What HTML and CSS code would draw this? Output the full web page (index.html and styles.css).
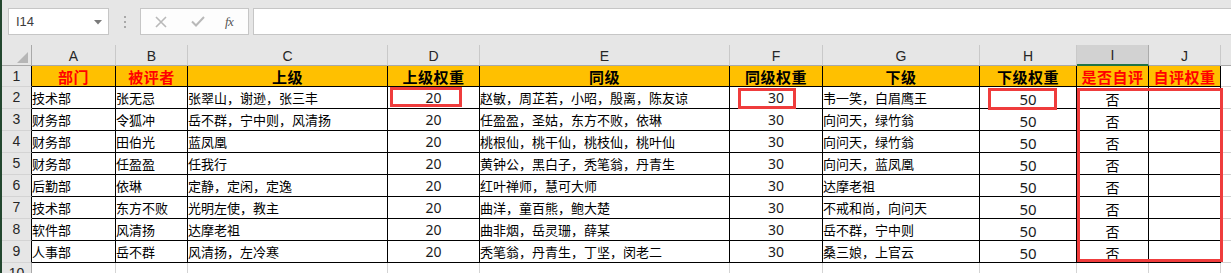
FILE: index.html
```html
<!DOCTYPE html>
<html lang="zh-CN">
<head>
<meta charset="utf-8">
<title>Sheet</title>
<link rel="stylesheet" href="styles.css">
</head>
<body>
<div class="app">
  <div class="toolbar">
    <div class="namebox">
      <span class="ref">I14</span>
      <svg class="caret" width="8" height="5" viewBox="0 0 8 5"><path d="M0 0H8L4 4.5Z" fill="#7a7a7a"/></svg>
    </div>
    <div class="grip"><i></i><i></i><i></i></div>
    <div class="fbtns">
      <svg class="ico-x" width="12" height="12" viewBox="0 0 12 12"><path d="M1 1L11 11M11 1L1 11" stroke="#b9b9b9" stroke-width="1.6" fill="none"/></svg>
      <svg class="ico-ok" width="14" height="11" viewBox="0 0 14 11"><path d="M1 5.5L5 9.5L13 1" stroke="#b9b9b9" stroke-width="2" fill="none"/></svg>
      <span class="fx">fx</span>
    </div>
    <div class="finput"></div>
  </div>

  <table class="sheet">
    <colgroup>
      <col class="w-rh"><col class="w-a"><col class="w-b"><col class="w-c"><col class="w-d"><col class="w-e"><col class="w-f"><col class="w-g"><col class="w-h"><col class="w-i"><col class="w-j"><col class="w-k">
    </colgroup>
    <thead>
      <tr class="colhead">
        <th class="corner"><span class="tri"></span></th>
        <th>A</th><th>B</th><th>C</th><th>D</th><th>E</th><th>F</th><th>G</th><th>H</th><th class="sel">I</th><th>J</th><th></th>
      </tr>
    </thead>
    <tbody>
      <tr class="r1 in">
        <th>1</th>
        <td class="t red">部门</td><td class="t red">被评者</td><td class="t">上级</td><td class="t">上级权重</td><td class="t">同级</td><td class="t">同级权重</td><td class="t">下级</td><td class="t">下级权重</td><td class="t red">是否自评</td><td class="t red">自评权重</td><td class="out"></td>
      </tr>
      <tr class="in">
        <th>2</th>
        <td>技术部</td><td>张无忌</td><td>张翠山，谢逊，张三丰</td><td class="n">20</td><td>赵敏，周芷若，小昭，殷离，陈友谅</td><td class="n">30</td><td>韦一笑，白眉鹰王</td><td class="n lo">50</td><td class="c lo">否</td><td></td><td class="out"></td>
      </tr>
      <tr class="in">
        <th>3</th>
        <td>财务部</td><td>令狐冲</td><td>岳不群，宁中则，风清扬</td><td class="n">20</td><td>任盈盈，圣姑，东方不败，依琳</td><td class="n">30</td><td>向问天，绿竹翁</td><td class="n lo">50</td><td class="c lo">否</td><td></td><td class="out"></td>
      </tr>
      <tr class="in">
        <th>4</th>
        <td>财务部</td><td>田伯光</td><td>蓝凤凰</td><td class="n">20</td><td>桃根仙，桃干仙，桃枝仙，桃叶仙</td><td class="n">30</td><td>向问天，绿竹翁</td><td class="n lo">50</td><td class="c lo">否</td><td></td><td class="out"></td>
      </tr>
      <tr class="in">
        <th>5</th>
        <td>财务部</td><td>任盈盈</td><td>任我行</td><td class="n">20</td><td>黄钟公，黑白子，秃笔翁，丹青生</td><td class="n">30</td><td>向问天，蓝凤凰</td><td class="n lo">50</td><td class="c lo">否</td><td></td><td class="out"></td>
      </tr>
      <tr class="in">
        <th>6</th>
        <td>后勤部</td><td>依琳</td><td>定静，定闲，定逸</td><td class="n">20</td><td>红叶禅师，慧可大师</td><td class="n">30</td><td>达摩老祖</td><td class="n lo">50</td><td class="c lo">否</td><td></td><td class="out"></td>
      </tr>
      <tr class="in">
        <th>7</th>
        <td>技术部</td><td>东方不败</td><td>光明左使，教主</td><td class="n">20</td><td>曲洋，童百熊，鲍大楚</td><td class="n">30</td><td>不戒和尚，向问天</td><td class="n lo">50</td><td class="c lo">否</td><td></td><td class="out"></td>
      </tr>
      <tr class="in">
        <th>8</th>
        <td>软件部</td><td>风清扬</td><td>达摩老祖</td><td class="n">20</td><td>曲非烟，岳灵珊，薛某</td><td class="n">30</td><td>岳不群，宁中则</td><td class="n lo">50</td><td class="c lo">否</td><td></td><td class="out"></td>
      </tr>
      <tr class="in">
        <th>9</th>
        <td>人事部</td><td>岳不群</td><td>风清扬，左冷寒</td><td class="n">20</td><td>秃笔翁，丹青生，丁坚，闵老二</td><td class="n">30</td><td>桑三娘，上官云</td><td class="n lo">50</td><td class="c lo">否</td><td></td><td class="out"></td>
      </tr>
      <tr class="r10">
        <th>10</th>
        <td></td><td></td><td></td><td></td><td></td><td></td><td></td><td></td><td></td><td></td><td></td>
      </tr>
    </tbody>
  </table>

  <div class="mark mark-d"></div>
  <div class="mark mark-f"></div>
  <div class="mark mark-h"></div>
  <div class="mark mark-ij"></div>
</div>
</body>
</html>
```

FILE: styles.css
```css
html, body {
  margin: 0;
  padding: 0;
  background: #ffffff;
}

.app {
  position: relative;
  width: 1231px;
  height: 273px;
  overflow: hidden;
  border-left: 2px solid #23472f;
  box-sizing: border-box;
  background: #ffffff;
  font-family: "Noto Sans CJK SC", "Noto Sans", sans-serif;
}

/* ---------- formula bar ---------- */
.toolbar {
  display: flex;
  align-items: flex-start;
  height: 45px;
  box-sizing: border-box;
  padding: 8px 0 0 6px;
  background: #e6e6e6;
}

.namebox {
  width: 101px;
  height: 27px;
  box-sizing: border-box;
  border: 1px solid #c6c6c6;
  background: #ffffff;
  display: flex;
  align-items: center;
  justify-content: space-between;
  padding: 0 6px 0 7px;
}

.ref {
  font-family: "Liberation Sans", "Noto Sans", sans-serif;
  font-size: 13px;
  color: #3c3c3c;
}

.caret {
  margin-top: 1px;
}

.grip {
  width: 31px;
  height: 27px;
  display: flex;
  flex-direction: column;
  align-items: center;
  justify-content: center;
  gap: 3px;
}

.grip i {
  display: block;
  width: 2px;
  height: 2px;
  background: #a8a8a8;
}

.fbtns {
  width: 109px;
  height: 27px;
  box-sizing: border-box;
  border: 1px solid #c6c6c6;
  background: #fdfdfd;
  display: flex;
  align-items: center;
  padding-left: 14px;
}

.ico-x {
  margin-right: 24px;
}

.ico-ok {
  margin-right: 20px;
}

.fx {
  font-family: "Liberation Serif", serif;
  font-style: italic;
  font-size: 13px;
  color: #555555;
  letter-spacing: -0.5px;
}

.finput {
  flex: 1;
  height: 27px;
  box-sizing: border-box;
  margin-left: 4px;
  border: 1px solid #c6c6c6;
  border-right: 0;
  background: #ffffff;
}

/* ---------- sheet ---------- */
.sheet {
  table-layout: fixed;
  border-collapse: separate;
  border-spacing: 0;
  width: 1299px;
}

.w-rh { width: 30px; }
.w-a { width: 84px; }
.w-b { width: 72px; }
.w-c { width: 200px; }
.w-d { width: 92px; }
.w-e { width: 250px; }
.w-f { width: 93px; }
.w-g { width: 157px; }
.w-h { width: 97px; }
.w-i { width: 72px; }
.w-j { width: 72px; }
.w-k { width: 80px; }

.sheet th,
.sheet td {
  padding: 0;
  box-sizing: border-box;
  overflow: hidden;
  white-space: nowrap;
}

.colhead {
  height: 20px;
}

.colhead th {
  background: #e6e6e6;
  border-right: 1px solid #c9c9c9;
  border-bottom: 1px solid #a9a9a9;
  font-family: "Liberation Sans", "Noto Sans", sans-serif;
  font-weight: normal;
  font-size: 14px;
  color: #262626;
  text-align: center;
  vertical-align: middle;
  line-height: 18px;
  padding-top: 1px;
}

.colhead th.corner {
  position: relative;
  border-right-color: #a9a9a9;
}

.tri {
  position: absolute;
  right: 3px;
  bottom: 2px;
  width: 0;
  height: 0;
  border-left: 11px solid transparent;
  border-bottom: 11px solid #b6b6b6;
}

.colhead th.sel {
  background: #d2d2d2;
  border-bottom: 2px solid #217346;
  border-right-color: #ababab;
}

tbody tr {
  height: 22px;
}

tbody tr.r1 {
  height: 21px;
}

tbody th {
  background: #e6e6e6;
  border-right: 1px solid #a9a9a9;
  border-bottom: 1px solid #d4d4d4;
  font-family: "Liberation Sans", "Noto Sans", sans-serif;
  font-weight: normal;
  font-size: 14px;
  color: #262626;
  text-align: center;
  vertical-align: middle;
  padding-top: 2px;
  line-height: 19px;
}

tr.in th {
  border-right-color: #000000;
}

tbody td {
  border-right: 1px solid #d4d4d4;
  border-bottom: 1px solid #d4d4d4;
  font-size: 13px;
  color: #000000;
  vertical-align: middle;
  padding: 2px 2px 0 2px;
  line-height: 19px;
}

tr.in td {
  border-right-color: #000000;
  border-bottom-color: #000000;
}

tr.in td.out {
  border-right-color: #d4d4d4;
  border-bottom-color: #d4d4d4;
}

tr.r1 td.t {
  background: #ffc000;
  font-weight: bold;
  font-size: 15px;
  text-align: center;
  letter-spacing: 0.5px;
  padding: 1px 0 0 0;
  line-height: 19px;
}

tr.r1 td.out {
  background: #ffffff;
}

td.red,
tr.r1 td.red {
  color: #ff0000;
}

td.n {
  text-align: center;
  font-family: "Noto Sans", "Liberation Sans", sans-serif;
  font-size: 14px;
  color: #1a1a1a;
}

td.c {
  text-align: center;
  font-size: 14px;
}

tbody td.lo {
  padding-top: 4px;
  line-height: 17px;
}

td.n.lo {
  font-size: 15px;
}

/* ---------- drawn red rectangles (overlay shapes) ---------- */
.mark {
  position: absolute;
  border: 3px solid #ef3c3c;
  box-sizing: border-box;
  pointer-events: none;
}

.mark-d {
  left: 388px;
  top: 87px;
  width: 72px;
  height: 20px;
}

.mark-f {
  left: 736px;
  top: 88px;
  width: 58px;
  height: 21px;
}

.mark-h {
  left: 986px;
  top: 88px;
  width: 69px;
  height: 22px;
}

.mark-ij {
  left: 1075px;
  top: 88px;
  width: 146px;
  height: 174px;
}
```
